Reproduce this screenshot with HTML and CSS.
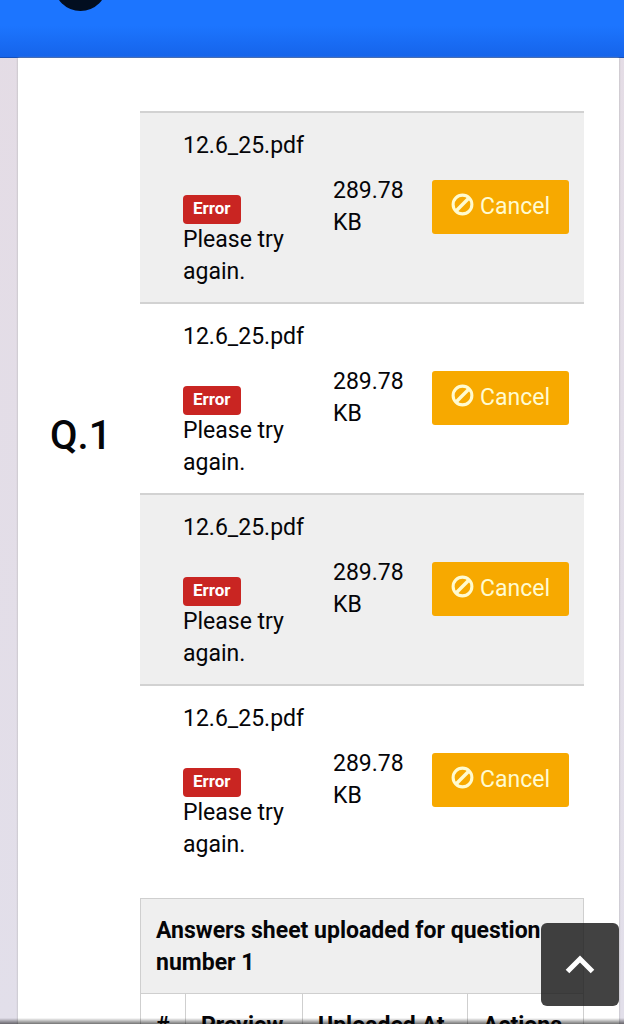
FILE: index.html
```html
<!DOCTYPE html>
<html lang="en">
<head>
<meta charset="utf-8">
<meta name="viewport" content="width=device-width, initial-scale=1">
<title>Upload answer sheets</title>
<link rel="stylesheet" href="styles.css">
</head>
<body>
<svg class="symbols" aria-hidden="true">
  <symbol id="ban" viewBox="0 0 24 24"><circle cx="12" cy="12" r="9.8" fill="none" stroke="currentColor" stroke-width="3.2"/><path d="M5.500 18.500 18.500 5.500" stroke="currentColor" stroke-width="3.600"/></symbol>
</svg>
<header class="topbar"><span class="avatar"></span></header>
<main class="card">
  <h1 class="question">Q.1</h1>
  <div class="content">
    <table class="files">
      <colgroup><col class="col-preview"><col class="col-name"><col class="col-size"><col class="col-action"></colgroup>
      <tbody>
        <tr>
          <td></td>
          <td class="file"><p class="name">12.6_25.pdf</p><strong class="badge">Error</strong><p class="message">Please try again.</p></td>
          <td>289.78 KB</td>
          <td><button class="cancel" type="button"><svg class="icon"><use href="#ban"/></svg><span>Cancel</span></button></td>
        </tr>
        <tr>
          <td></td>
          <td class="file"><p class="name">12.6_25.pdf</p><strong class="badge">Error</strong><p class="message">Please try again.</p></td>
          <td>289.78 KB</td>
          <td><button class="cancel" type="button"><svg class="icon"><use href="#ban"/></svg><span>Cancel</span></button></td>
        </tr>
        <tr>
          <td></td>
          <td class="file"><p class="name">12.6_25.pdf</p><strong class="badge">Error</strong><p class="message">Please try again.</p></td>
          <td>289.78 KB</td>
          <td><button class="cancel" type="button"><svg class="icon"><use href="#ban"/></svg><span>Cancel</span></button></td>
        </tr>
        <tr>
          <td></td>
          <td class="file"><p class="name">12.6_25.pdf</p><strong class="badge">Error</strong><p class="message">Please try again.</p></td>
          <td>289.78 KB</td>
          <td><button class="cancel" type="button"><svg class="icon"><use href="#ban"/></svg><span>Cancel</span></button></td>
        </tr>
      </tbody>
    </table>
    <table class="sheets">
      <colgroup><col class="col-index"><col class="col-thumb"><col class="col-date"><col></colgroup>
      <thead>
        <tr class="title"><th colspan="4">Answers sheet uploaded for question number 1</th></tr>
        <tr><th>#</th><th>Preview</th><th>Uploaded At</th><th>Actions</th></tr>
      </thead>
    </table>
  </div>
</main>
<button class="to-top" type="button" aria-label="Back to top"><svg class="chevron" viewBox="0 0 30 20"><path d="M2.500 16.500 15 4l12.500 12.500" fill="none" stroke="currentColor" stroke-width="5"/></svg></button>
<div class="bottom-edge"></div>
</body>
</html>
```
FILE: styles.css
```css
* { box-sizing: border-box; }

body {
  margin: 0;
  height: 100vh;
  overflow: hidden;
  background: linear-gradient(#e4dce5, #e2dfea);
  color: #050508;
  font: 23px/32px Roboto, Arial, sans-serif;
}

p { margin: 0; }
.symbols { display: none; }

.topbar {
  height: 58px;
  overflow: hidden;
  padding-left: 54px;
  background: linear-gradient(#1c75ff 45%, #1664ea);
  border-bottom: 1px solid #1750b8;
}

.avatar {
  display: block;
  width: 53px;
  height: 53px;
  margin-top: -42px;
  border-radius: 50%;
  background: #020e20;
}

.card {
  display: grid;
  grid-template-columns: 90px 1fr;
  min-height: 100vh;
  margin: 0 5px 0 18px;
  padding: 53px 35px 0 32px;
  background: #fff;
  box-shadow: 0 0 2px #aaa;
}

.question {
  margin: 0;
  padding-top: 301px;
  font-size: 40px;
  line-height: 48px;
  font-weight: 500;
}

table {
  width: 100%;
  table-layout: fixed;
  border-collapse: collapse;
}

.col-preview { width: 28px; }
.col-name { width: 150px; }
.col-size { width: 99px; }
.col-index { width: 45px; }
.col-thumb { width: 117px; }
.col-date { width: 165px; }

.files tr { border-top: 2px solid #d2d2d2; }
.files tr:nth-child(odd) { background: #efefef; }
.files td { padding: 14px 15px 16px; vertical-align: middle; }
.files td:first-child { padding: 0; }
.files .file { padding: 17px 15px 14px; }
.name { margin-bottom: 33px; }

.badge {
  display: block;
  width: fit-content;
  padding: 0 10px 2px;
  border-radius: 4px;
  background: #c92522;
  color: #fff;
  font-size: 17px;
  line-height: 27px;
}

.cancel {
  display: flex;
  align-items: center;
  justify-content: center;
  gap: 6px;
  width: 100%;
  height: 54px;
  padding: 0;
  border: 0;
  border-radius: 3px;
  background: #f7a900;
  color: #fffbd0;
  font: inherit;
}

.icon {
  width: 23px;
  height: 23px;
  margin-bottom: 4px;
}

.sheets { margin-top: 23px; }
.sheets th {
  padding: 16px 15px;
  border: 1px solid #cfcfcf;
  text-align: left;
  font-weight: 700;
}
.sheets .title { background: #efefef; }
.sheets .title th { padding-bottom: 14px; }
.sheets tr:not(.title) th { white-space: nowrap; }

.to-top {
  position: fixed;
  right: 5px;
  bottom: 18px;
  display: grid;
  place-items: center;
  width: 78px;
  height: 83px;
  padding: 0;
  border: 0;
  border-radius: 6px;
  background: rgba(25, 25, 25, 0.82);
  color: #fff;
}

.chevron { width: 30px; height: 20px; }

.bottom-edge {
  position: fixed;
  inset: auto 0 0;
  height: 6px;
  background: linear-gradient(transparent, rgba(0, 0, 0, 0.55));
}
```
